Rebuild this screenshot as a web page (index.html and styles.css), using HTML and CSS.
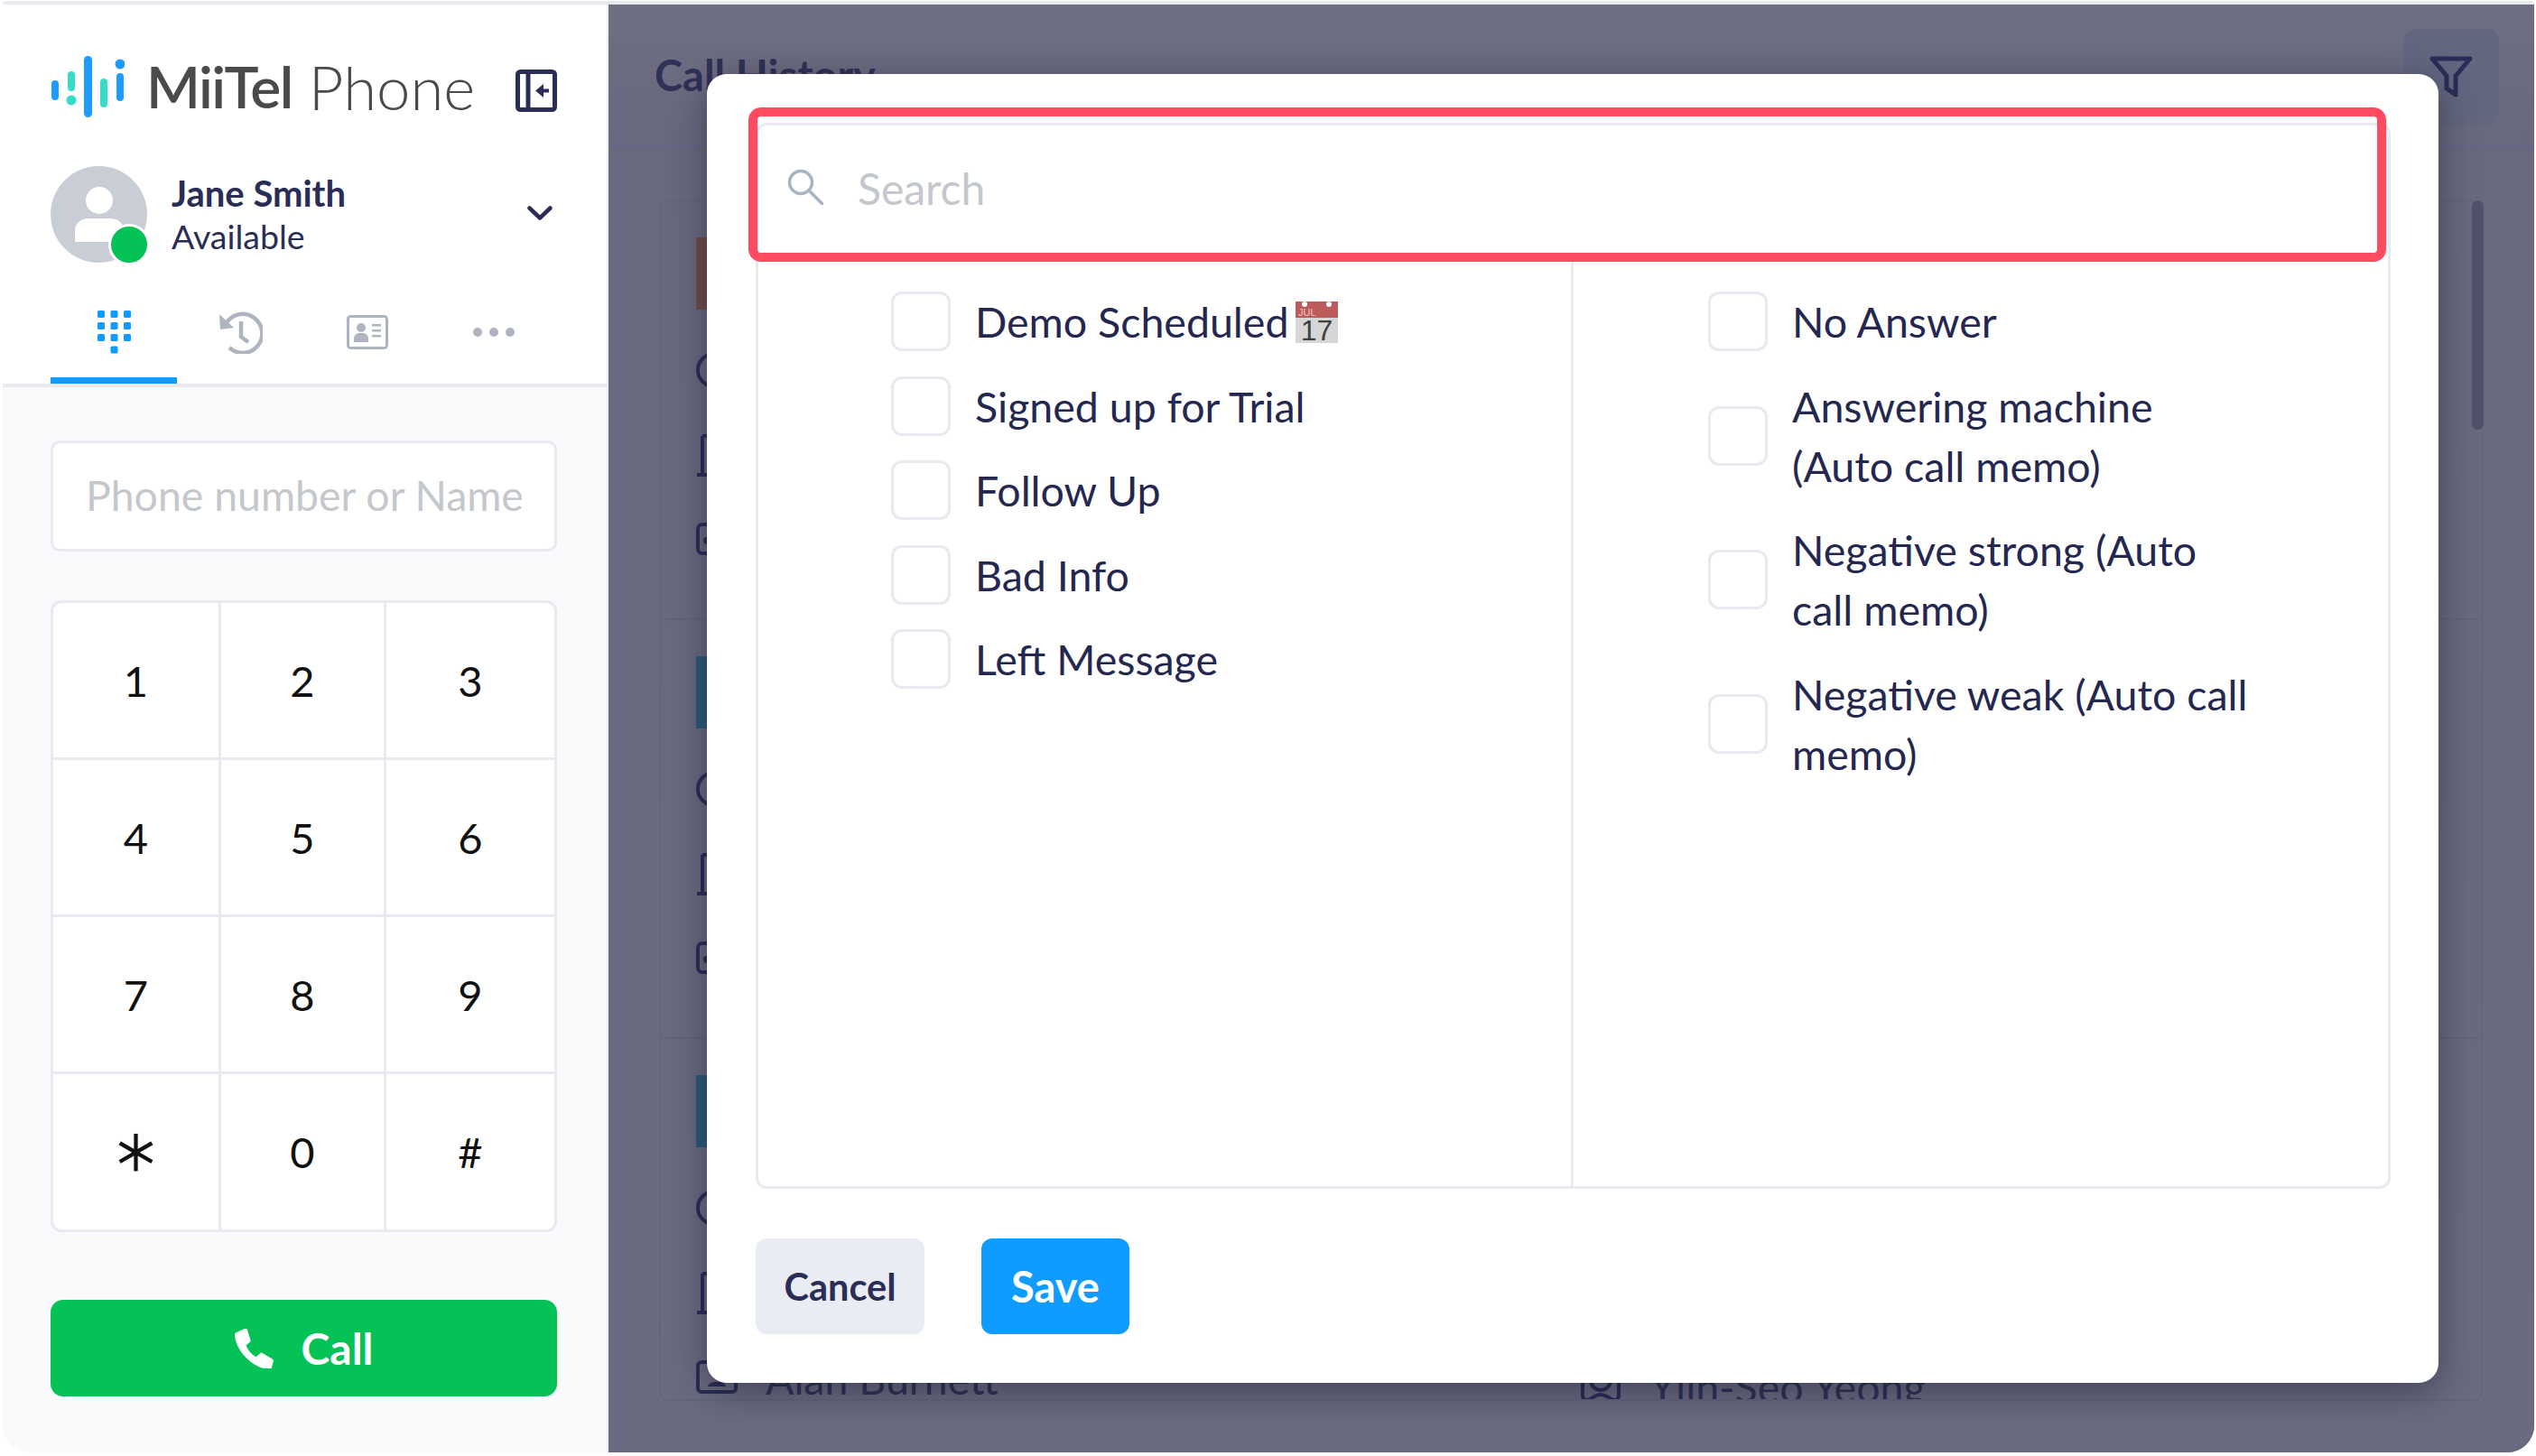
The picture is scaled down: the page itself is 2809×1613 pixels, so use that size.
FILE: index.html
```html
<!DOCTYPE html>
<html lang="en">
<head>
<meta charset="utf-8">
<title>MiiTel Phone</title>
<link rel="stylesheet" href="styles.css">
</head>
<body>
<div class="app">
  <aside class="sidebar">
    <div class="sidebar-top">
      <div class="brand">
        <svg class="brand-mark" viewBox="0 0 82 68" width="82" height="68" aria-hidden="true">
          <rect x="1" y="27" width="8" height="22" rx="4" fill="#1e9bff"/>
          <rect x="19" y="17" width="8" height="22" rx="4" fill="#37dcc8"/>
          <circle cx="23" cy="49" r="5.5" fill="#37dcc8"/>
          <rect x="37" y="0" width="9" height="68" rx="4.5" fill="#1e9bff"/>
          <rect x="55" y="25" width="8" height="32" rx="4" fill="#37dcc8"/>
          <circle cx="77" cy="9" r="5.5" fill="#1e9bff"/>
          <rect x="73" y="19" width="8" height="31" rx="4" fill="#1e9bff"/>
        </svg>
        <span class="brand-name">MiiTel</span>
        <span class="brand-sub">Phone</span>
        <svg class="collapse" viewBox="0 0 46 47" width="46" height="47" aria-hidden="true" fill="none" stroke="#2a2d55" stroke-width="5">
          <rect x="2.5" y="2.5" width="41" height="42" rx="3"/>
          <path d="M14 3v41"/>
          <path d="M37 23.5H26" stroke-width="4"/>
          <path d="M31 16l-9 7.5 9 7.500z" fill="#2a2d55" stroke="none"/>
        </svg>
      </div>
      <div class="user">
        <div class="avatar">
          <svg viewBox="0 0 107 107" width="107" height="107" aria-hidden="true">
            <circle cx="53.500" cy="53.500" r="53.500" fill="#c8cdd6"/>
            <circle cx="54" cy="38" r="15" fill="#fff"/>
            <path d="M27 84V72c0-9 7-14 15-14h24c9 0 15 5 15 14v12z" fill="#fff"/>
          </svg>
          <span class="presence"></span>
        </div>
        <div class="user-text">
          <div class="user-name">Jane Smith</div>
          <div class="user-status">Available</div>
        </div>
        <svg class="chevron" viewBox="0 0 28 16" width="28" height="16" aria-hidden="true" fill="none" stroke="#2a2d55" stroke-width="4.500" stroke-linecap="round" stroke-linejoin="round">
          <path d="M2.500 2.500L14 13.500 25.500 2.500"/>
        </svg>
      </div>
      <nav class="tabs">
        <div class="tab tab-active">
          <svg viewBox="0 0 37 48" width="37" height="48" aria-hidden="true" fill="#0f9bff">
            <rect x="0" y="0" width="8" height="8" rx="1.500"/><rect x="14.500" y="0" width="8" height="8" rx="1.500"/><rect x="29" y="0" width="8" height="8" rx="1.500"/>
            <rect x="0" y="13" width="8" height="8" rx="1.500"/><rect x="14.500" y="13" width="8" height="8" rx="1.500"/><rect x="29" y="13" width="8" height="8" rx="1.500"/>
            <rect x="0" y="26" width="8" height="8" rx="1.500"/><rect x="14.500" y="26" width="8" height="8" rx="1.500"/><rect x="29" y="26" width="8" height="8" rx="1.500"/>
            <rect x="14.500" y="39.500" width="8" height="8" rx="1.500"/>
          </svg>
        </div>
        <div class="tab">
          <svg viewBox="0 0 48 48" width="48" height="48" aria-hidden="true" fill="none" stroke="#aeb5c0" stroke-width="4.500">
            <path d="M7 15A21.500 21.500 0 1 1 11 41"/>
            <path d="M0 4l1 17 15-2z" fill="#aeb5c0" stroke="none"/>
            <path d="M24 12v17l8 6"/>
          </svg>
        </div>
        <div class="tab">
          <svg viewBox="0 0 46 38" width="46" height="38" aria-hidden="true" fill="#aeb5c0">
            <rect x="1.500" y="1.500" width="43" height="35" rx="3" fill="none" stroke="#aeb5c0" stroke-width="3"/>
            <circle cx="16" cy="14" r="5"/>
            <path d="M8 30v-3c0-5 3-7 6-7h4c3 0 6 2 6 7v3z"/>
            <rect x="28" y="10" width="10" height="2.500"/><rect x="28" y="16" width="10" height="2.500"/><rect x="28" y="22" width="10" height="2.500"/>
          </svg>
        </div>
        <div class="tab">
          <svg viewBox="0 0 46 10" width="46" height="10" aria-hidden="true" fill="#aeb5c0">
            <circle cx="5" cy="5" r="5"/><circle cx="23" cy="5" r="5"/><circle cx="41" cy="5" r="5"/>
          </svg>
        </div>
      </nav>
    </div>
    <div class="dial">
      <input class="dial-input" type="text" placeholder="Phone number or Name">
      <div class="keypad">
        <div class="key">1</div><div class="key">2</div><div class="key">3</div>
        <div class="key">4</div><div class="key">5</div><div class="key">6</div>
        <div class="key">7</div><div class="key">8</div><div class="key">9</div>
        <div class="key key-star">∗</div><div class="key">0</div><div class="key">#</div>
      </div>
      <button class="call" type="button">
        <svg viewBox="0 0 45 44" width="45" height="44" aria-hidden="true" fill="#fff">
          <path d="M2 4l9-4c1.500-.5 2.500 0 3 1.500l3.500 11c.3 1 0 2-1 2.700l-4 3c2 5.500 6 10 11 13l4.500-4c.8-.7 1.800-.8 2.700-.3l11 6.500c1.200.8 1.500 1.700 1 3l-2 7.500c-.4 1-1.200 1.500-2.300 1.500C19 43 1 24 0 7c0-1.500.8-2.500 2-3z"/>
        </svg>
        <span>Call</span>
      </button>
    </div>
  </aside>
  <main class="history">
    <header class="history-head">
      <h1 class="history-title">Call History</h1>
      <div class="filter-btn">
        <svg viewBox="0 0 48 46" width="48" height="46" aria-hidden="true" fill="none" stroke="#2a2d55" stroke-width="5" stroke-linejoin="round">
          <path d="M3 3h42L29 22v21l-10-7V22z"/>
        </svg>
      </div>
    </header>
    <div class="history-body">
      <div class="list">
        <section class="row row-first">
          <span class="thumb thumb-brown"></span>
          <div class="row-icons">
            <svg class="ico" viewBox="0 0 46 40" width="46" height="40" aria-hidden="true"><circle cx="20" cy="20" r="18"/></svg>
            <svg class="ico" viewBox="0 0 46 47" width="46" height="47" aria-hidden="true"><path d="M7 2h34v43M7 2v43M1 45h44"/></svg>
            <svg class="ico ico-card" viewBox="0 0 46 36" width="46" height="36" aria-hidden="true"><rect x="2" y="2" width="42" height="32" rx="5"/><circle cx="12" cy="20" r="4" class="ico-fill"/></svg>
          </div>
        </section>
        <section class="row">
          <span class="thumb thumb-teal"></span>
          <div class="row-icons">
            <svg class="ico" viewBox="0 0 46 40" width="46" height="40" aria-hidden="true"><circle cx="20" cy="20" r="18"/></svg>
            <svg class="ico" viewBox="0 0 46 47" width="46" height="47" aria-hidden="true"><path d="M7 2h34v43M7 2v43M1 45h44"/></svg>
            <svg class="ico ico-card" viewBox="0 0 46 36" width="46" height="36" aria-hidden="true"><rect x="2" y="2" width="42" height="32" rx="5"/><circle cx="12" cy="20" r="4" class="ico-fill"/></svg>
          </div>
        </section>
        <section class="row row-last">
          <span class="thumb thumb-teal"></span>
          <div class="row-icons">
            <svg class="ico" viewBox="0 0 46 40" width="46" height="40" aria-hidden="true"><circle cx="20" cy="20" r="18"/></svg>
            <svg class="ico" viewBox="0 0 46 47" width="46" height="47" aria-hidden="true"><path d="M7 2h34v43M7 2v43M1 45h44"/></svg>
          </div>
          <div class="row-foot">
            <div class="person">
              <svg class="ico" viewBox="0 0 46 37" width="46" height="37" aria-hidden="true"><rect x="2" y="2" width="42" height="33" rx="4"/><circle cx="23" cy="14" r="6" class="ico-fill"/><path d="M13 29c1-7 19-7 20 0z" class="ico-fill"/></svg>
              <span>Alan Burnett</span>
            </div>
            <div class="person person-b">
              <svg class="ico" viewBox="0 0 46 48" width="46" height="48" aria-hidden="true"><circle cx="23" cy="13" r="11"/><path d="M3 14v16c0 4 3 5 5 5 4 0 8-6 15-6s11 6 15 6c2 0 5-1 5-5V14"/></svg>
              <span>Yiin-Seo Yeong</span>
            </div>
          </div>
        </section>
      </div>
      <div class="scroll-thumb"></div>
    </div>
  </main>
  <div class="modal">
    <div class="panel">
      <div class="search">
        <svg viewBox="0 0 40 40" width="40" height="40" aria-hidden="true" fill="none" stroke="#a6b4c4" stroke-width="3.500">
          <circle cx="15" cy="15" r="12.500"/>
          <path d="M24 24l15 15" stroke-linecap="round"/>
        </svg>
        <input class="search-input" type="text" placeholder="Search">
      </div>
      <div class="columns">
        <div class="col">
          <label class="opt"><span class="box"></span><span class="opt-label">Demo Scheduled
            <svg class="cal" viewBox="0 0 47 46" width="47" height="46" aria-hidden="true">
              <rect width="47" height="46" fill="#d6d6d6"/>
              <rect width="47" height="18" fill="#bd5a5c"/>
              <circle cx="10" cy="3" r="3" fill="#fff"/>
              <circle cx="37" cy="3" r="3" fill="#fff"/>
              <text x="3" y="16" class="cal-month">JUL</text>
              <text x="23.500" y="43" class="cal-num">17</text>
            </svg></span></label>
          <label class="opt"><span class="box"></span><span class="opt-label">Signed up for Trial</span></label>
          <label class="opt"><span class="box"></span><span class="opt-label">Follow Up</span></label>
          <label class="opt"><span class="box"></span><span class="opt-label">Bad Info</span></label>
          <label class="opt"><span class="box"></span><span class="opt-label">Left Message</span></label>
        </div>
        <div class="col col-right">
          <label class="opt"><span class="box"></span><span class="opt-label">No Answer</span></label>
          <label class="opt"><span class="box"></span><span class="opt-label">Answering machine (Auto call memo)</span></label>
          <label class="opt"><span class="box"></span><span class="opt-label">Negative strong (Auto call memo)</span></label>
          <label class="opt"><span class="box"></span><span class="opt-label">Negative weak (Auto call memo)</span></label>
        </div>
      </div>
    </div>
    <div class="actions">
      <button class="btn btn-cancel" type="button">Cancel</button>
      <button class="btn btn-save" type="button">Save</button>
    </div>
    <div class="highlight"></div>
  </div>
</div>
</body>
</html>
```

FILE: styles.css
```css
* { box-sizing: border-box; }
html, body { margin: 0; height: 100%; background: #fff; }
body { padding: 1px 2px 4px 3px; font-family: "Lato", "Liberation Sans", sans-serif; color: #2a2d55; overflow: hidden; }

.app {
  position: relative;
  display: flex;
  height: 1608px;
  border-top: 4px solid #e8eaef;
  border-radius: 4px 4px 30px 30px;
  overflow: hidden;
}

/* Sidebar */
.sidebar { width: 671px; flex: none; display: flex; flex-direction: column; background: #f9fafc; border-right: 2px solid #eceef2; }
.sidebar-top { background: #fff; padding: 57px 0 0 53px; border-bottom: 4px solid #e8eaef; height: 424px; }
.brand { display: flex; align-items: center; height: 68px; width: 561px; }
.brand-mark { flex: none; }
.brand-name { margin-left: 24px; font-size: 64px; font-weight: 600; color: #4a4a4a; line-height: 68px; letter-spacing: -1.500px; }
.brand-sub { margin-left: 18px; font-size: 67px; font-weight: 300; color: #4a4a4a; line-height: 68px; }
.collapse { margin-left: auto; margin-top: 9px; flex: none; }
.user { display: flex; align-items: center; margin-top: 54px; width: 556px; }
.avatar { position: relative; width: 107px; height: 107px; flex: none; }
.avatar svg { display: block; }
.presence { position: absolute; right: -3px; bottom: -3px; width: 46px; height: 46px; border-radius: 50%; background: #04c255; border: 3px solid #fff; }
.user-text { margin-left: 27px; flex: 1; }
.user-name { font-size: 40px; font-weight: 700; line-height: 48px; }
.user-status { font-size: 37.500px; line-height: 48px; }
.chevron { flex: none; margin-top: -3px; }
.tabs { display: flex; margin-top: 33px; width: 564px; }
.tab { width: 140.400px; height: 101px; display: flex; align-items: center; justify-content: center; padding-bottom: 13px; }
.tab-active { border-bottom: 7px solid #0f9bff; padding-bottom: 6px; }

.dial { flex: 1; padding: 59px 53px 0 53px; display: flex; flex-direction: column; }
.dial-input {
  height: 123px; width: 561px; border: 3px solid #e8eaef; border-radius: 10px; background: #fff;
  padding: 0 36px 3px; font: 400 46.400px "Lato", sans-serif; color: #2a2d55; outline: none;
}
.dial-input::placeholder { color: #c4c7cc; opacity: 1; }
.keypad {
  margin-top: 54px; width: 561px; height: 700px; display: grid;
  grid-template-columns: 186px 183px 1fr; grid-template-rows: 174px 174px 174px 1fr;
  background: #fff; border: 3px solid #e8eaef; border-radius: 12px; overflow: hidden;
}
.key { display: flex; align-items: center; justify-content: center; font-size: 47px; color: #111; border-right: 3px solid #e8eaef; border-bottom: 3px solid #e8eaef; }
.key:nth-child(3n) { border-right: 0; }
.key:nth-last-child(-n+3) { border-bottom: 0; }
.key-star { font-family: "Liberation Sans", sans-serif; font-size: 68px; padding-bottom: 3px; -webkit-text-stroke: 1.200px #fff; }
.call {
  margin-top: 75px; height: 107px; width: 561px; border: 0; border-radius: 14px; background: #04c255; color: #fff;
  display: flex; align-items: center; justify-content: center; gap: 29px; font: 700 48px "Lato", sans-serif;
}

/* Background */
.history { flex: 1; min-width: 0; background: #6b6c80; background-image: linear-gradient(#6e6f83, #68697e 140px, #6a6b80); display: flex; flex-direction: column; }
.history-head { height: 158px; padding: 27px 39px 0 51px; display: flex; justify-content: space-between; border-bottom: 2px solid #63648a; flex: none; }
.history-title { margin: 23px 0 0; font-size: 47px; font-weight: 700; line-height: 56px; color: #2f3156; }
.filter-btn { width: 106px; height: 106px; border-radius: 14px; background: #62667f; display: flex; align-items: center; justify-content: center; }
.history-body { flex: 1; position: relative; padding: 59px 57px 57px 56px; min-height: 0; }
.list { height: 100%; width: 100%; border: 2px solid #65667b; border-radius: 10px; overflow: hidden; display: flex; flex-direction: column; }
.row { height: 464px; padding: 40px 0 0 39px; border-bottom: 2px solid #646578; display: flex; flex-direction: column; flex: none; }
.row-first { height: 463px; padding-top: 39px; }
.row-last { flex: 1; border-bottom: 0; height: auto; min-height: 0; position: relative; }
.thumb { display: block; width: 80px; height: 80px; flex: none; }
.thumb-brown { background: #6e4d48; }
.thumb-teal { background: #2c5a78; }
.row-icons { display: flex; flex-direction: column; gap: 51px; margin-top: 47px; }
.ico { display: block; flex: none; fill: none; stroke: #2a2d55; stroke-width: 4; }
.ico-fill { fill: #2a2d55; stroke: none; }
.row-foot { position: absolute; left: 39px; right: 0; top: 348px; display: flex; }
.person { display: flex; align-items: flex-start; gap: 31px; font-size: 46.500px; line-height: 56px; color: #2f3156; width: 979px; flex: none; }
.person svg { margin-top: 8px; }
.person span { white-space: nowrap; }
.person-b { width: auto; margin-top: 9px; }
.scroll-thumb { position: absolute; top: 59px; right: 56px; width: 13px; height: 254px; border-radius: 7px; background: #51526a; }

/* Modal */
.modal {
  position: absolute; left: 780px; top: 77px; width: 1918px; height: 1450px;
  background: #fff; border-radius: 22px; padding: 54px 53px 0 54px;
  box-shadow: 0 10px 40px rgba(20, 20, 40, .45);
}
.panel { height: 1181px; border: 3px solid #e8eaef; border-radius: 12px; display: flex; flex-direction: column; }
.search { height: 151px; display: flex; align-items: center; padding: 0 0 13px 32px; gap: 38px; flex: none; }
.search svg { flex: none; margin-top: -2px; }
.search-input { flex: 1; border: 0; outline: 0; background: transparent; font: 400 48px "Lato", sans-serif; color: #2a2d55; padding: 0; min-width: 0; }
.search-input::placeholder { color: #c4c7cc; opacity: 1; }
.columns { flex: 1; display: grid; grid-template-columns: 900px 1fr; min-height: 0; }
.col { padding: 33px 100px 0 147px; display: flex; flex-direction: column; gap: 27.500px; }
.col-right { border-left: 3px solid #e8eaef; padding: 33px 145px 0 149px; }
.opt { display: flex; align-items: center; gap: 27px; font-size: 46.500px; line-height: 66px; color: #24274f; }
.box { width: 66px; height: 66px; flex: none; border: 3px solid #e8eaef; border-radius: 12px; background: #fff; }
.cal { vertical-align: -6px; margin-left: -4px; }
.cal-num { font-size: 32px; fill: #3f3f3f; text-anchor: middle; font-family: "Liberation Sans", sans-serif; }
.cal-month { font-size: 11px; fill: #eec4c4; font-family: "Liberation Sans", sans-serif; }
.actions { display: flex; gap: 63px; margin-top: 55px; }
.btn { height: 106px; border: 0; border-radius: 12px; font: 700 41.500px "Lato", sans-serif; }
.btn-cancel { width: 187px; background: #e9edf3; color: #2a2d55; }
.btn-save { width: 164px; background: #0f9bff; color: #fff; font-size: 47px; }
.highlight { position: absolute; left: 46px; top: 37px; width: 1814px; height: 171px; border: 10px solid #ff4a60; border-radius: 14px; pointer-events: none; }
```
